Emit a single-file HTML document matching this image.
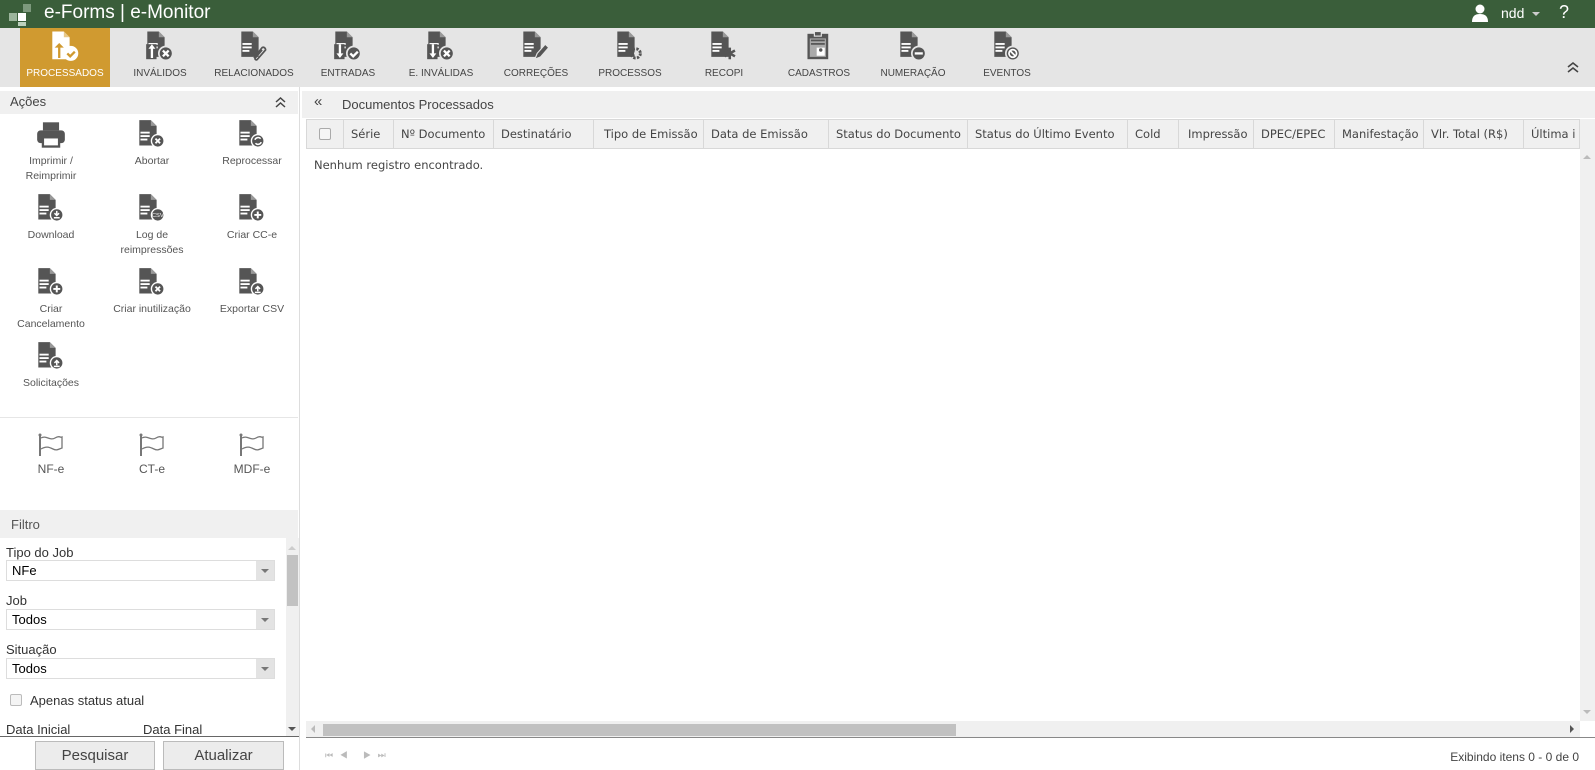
<!DOCTYPE html>
<html><head><meta charset="utf-8"><style>
*{box-sizing:border-box;margin:0;padding:0}
body{width:1595px;height:770px;overflow:hidden;background:#fff;font-family:"Liberation Sans",sans-serif;position:relative;color:#333}
.abs{position:absolute}
#top{left:0;top:0;width:1595px;height:28px;background:#3a5e3a;color:#fff}
#tb{left:0;top:28px;width:1595px;height:59px;background:#e5e5e5}
.tab{position:absolute;top:0;height:59px;width:90px;margin-left:-45px;text-align:center;font-size:10px;color:#444}
.tab svg{position:absolute;left:30px;top:2px}
.tab span{position:absolute;left:-10px;right:-10px;top:40px}
.tab.act{background:#d09a30;color:#fff}
.ic{position:absolute;width:100px;margin-left:-50px;text-align:center;font-size:10.5px;color:#555;line-height:15px}
.ic svg{display:block;margin:0 auto 5px}
.th{position:absolute;top:0;height:29px;line-height:28px;border-right:1px solid #d8d8d8;font-family:"DejaVu Sans",sans-serif;font-size:11.5px;color:#444;padding-left:7px;white-space:nowrap;overflow:hidden}
.lbl{position:absolute;left:6px;font-size:13px;color:#333}
.sel{position:absolute;left:6px;width:269px;height:21px;border:1px solid #ddd;background:#fff;font-size:13px;color:#000;padding:2px 5px}
.sel:after{content:"";position:absolute;right:0;top:0;width:18px;height:19px;background:#e3e3e3}
.sel i{position:absolute;right:5px;top:8px;width:0;height:0;border-left:4px solid transparent;border-right:4px solid transparent;border-top:4px solid #777;z-index:2}
.btn{position:absolute;top:741px;height:29px;border:1px solid #bbb;background:#ececec;font-size:15px;color:#444;text-align:center;line-height:28px}
</style></head><body>
<svg width="0" height="0" style="position:absolute"><defs>
<g id="doc"><path d="M2 1h10l5 5v17H2z" fill="#555"/><path d="M12 1l5 5h-5z" fill="#999"/><rect x="3" y="11" width="8" height="1.6" fill="#fff"/><rect x="3" y="14" width="8" height="1.6" fill="#fff"/><rect x="3" y="17" width="6" height="1.6" fill="#fff"/></g>
</defs></svg>

<div id="top" class="abs">
 <div class="abs" style="left:9px;top:13px;width:8px;height:8px;background:#9cb59c"></div>
 <div class="abs" style="left:18px;top:13px;width:8px;height:8px;background:#fff"></div>
 <div class="abs" style="left:23px;top:4px;width:8px;height:8px;background:#7d997d"></div>
 <div class="abs" style="left:18px;top:22px;width:8px;height:4px;background:#bcd0bc"></div>
 <div class="abs" style="left:44px;top:2px;font-size:19px;color:#fff">e-Forms | e-Monitor</div>
 <svg class="abs" style="left:1472px;top:4px" width="16" height="18"><circle cx="8" cy="5" r="4.5" fill="#fff"/><path d="M0 18c0-6 3-8 8-8s8 2 8 8z" fill="#fff"/></svg>
 <div class="abs" style="left:1501px;top:5px;font-size:14px">ndd</div>
 <div class="abs" style="left:1532px;top:12px;border-left:4px solid transparent;border-right:4px solid transparent;border-top:4px solid #ccc"></div>
 <div class="abs" style="left:1559px;top:2px;font-size:18px">?</div>
</div>

<div id="tb" class="abs">
 <div class="tab act" style="left:65px"><svg width="30" height="33" viewBox="0 0 26 28"><path d="M2 1h10l5 5v19H2z" fill="#fff"/><path d="M12 1l5 5h-5z" fill="#e8c98a"/><path d="M7 24v-9h-3l4-4 4 4h-3v9z" fill="#d09a30"/><circle cx="18" cy="20" r="6.5" fill="#fff"/><path d="M15 20l2.5 2.5 4-4" stroke="#d09a30" stroke-width="2" fill="none"/></svg><span>PROCESSADOS</span></div>
 <div class="tab" style="left:160px"><svg width="30" height="33" viewBox="0 0 26 28"><use href="#doc"/><rect x="1" y="12" width="9" height="13" fill="#555"/><path d="M5 24v-8h-2l3-4 3 4h-2v8z" fill="#fff"/><circle cx="18" cy="20" r="6" fill="#555" stroke="#e5e5e5" stroke-width="1.5"/><path d="M15.5 17.5l5 5m0-5l-5 5" stroke="#fff" stroke-width="2"/></svg><span>INVÁLIDOS</span></div>
 <div class="tab" style="left:254px"><svg width="30" height="33" viewBox="0 0 26 28"><use href="#doc"/><path d="M13 24l7-9a2 2 0 0 1 3 2l-7 8a1 1 0 0 1-2-1l6-7" stroke="#555" stroke-width="1.5" fill="none"/></svg><span>RELACIONADOS</span></div>
 <div class="tab" style="left:348px"><svg width="30" height="33" viewBox="0 0 26 28"><use href="#doc"/><rect x="1" y="12" width="9" height="13" fill="#555"/><path d="M5 12v8h-2l3 4 3-4h-2v-8z" fill="#fff"/><circle cx="18" cy="20" r="6" fill="#555" stroke="#e5e5e5" stroke-width="1.5"/><path d="M15 20l2.5 2.5 4-4" stroke="#fff" stroke-width="2" fill="none"/></svg><span>ENTRADAS</span></div>
 <div class="tab" style="left:441px"><svg width="30" height="33" viewBox="0 0 26 28"><use href="#doc"/><rect x="1" y="12" width="9" height="13" fill="#555"/><path d="M5 12v8h-2l3 4 3-4h-2v-8z" fill="#fff"/><circle cx="18" cy="20" r="6" fill="#555" stroke="#e5e5e5" stroke-width="1.5"/><path d="M15.5 17.5l5 5m0-5l-5 5" stroke="#fff" stroke-width="2"/></svg><span>E. INVÁLIDAS</span></div>
 <div class="tab" style="left:536px"><svg width="30" height="33" viewBox="0 0 26 28"><use href="#doc"/><path d="M12 25l2-5 7-8 3 3-7 8z" fill="#555" stroke="#e5e5e5" stroke-width="1"/></svg><span>CORREÇÕES</span></div>
 <div class="tab" style="left:630px"><svg width="30" height="33" viewBox="0 0 26 28"><use href="#doc"/><circle cx="18" cy="20" r="4" fill="none" stroke="#555" stroke-width="2.5" stroke-dasharray="2 1.2"/><circle cx="18" cy="20" r="1.5" fill="#e5e5e5"/></svg><span>PROCESSOS</span></div>
 <div class="tab" style="left:724px"><svg width="30" height="33" viewBox="0 0 26 28"><use href="#doc"/><path d="M18 15v10m-4.5-7.5l9 5m0-5l-9 5" stroke="#555" stroke-width="2.2"/></svg><span>RECOPI</span></div>
 <div class="tab" style="left:819px"><svg width="30" height="33" viewBox="0 0 26 28"><rect x="3" y="3" width="18" height="22" fill="#555"/><rect x="9" y="1" width="6" height="4" fill="#555" stroke="#e5e5e5"/><rect x="5" y="7" width="14" height="16" fill="#aaa"/><rect x="6" y="8" width="12" height="1.5" fill="#555"/><rect x="6" y="11" width="12" height="1.5" fill="#555"/><rect x="11" y="15" width="7" height="7" fill="#fff"/><circle cx="14.5" cy="17" r="1.5" fill="#555"/></svg><span>CADASTROS</span></div>
 <div class="tab" style="left:913px"><svg width="30" height="33" viewBox="0 0 26 28"><use href="#doc"/><circle cx="18" cy="20" r="6" fill="#555" stroke="#e5e5e5" stroke-width="1.5"/><rect x="14.5" y="19" width="7" height="2" fill="#fff"/></svg><span>NUMERAÇÃO</span></div>
 <div class="tab" style="left:1007px"><svg width="30" height="33" viewBox="0 0 26 28"><use href="#doc"/><circle cx="18" cy="20" r="6" fill="#555" stroke="#e5e5e5" stroke-width="1.5"/><circle cx="18" cy="20" r="3.3" fill="none" stroke="#fff" stroke-width="1.5"/><path d="M15.7 17.7l4.6 4.6" stroke="#fff" stroke-width="1.5"/></svg><span>EVENTOS</span></div>
 <svg class="abs" style="left:1567px;top:33px" width="12" height="12"><path d="M1 6l5-4 5 4M1 11l5-4 5 4" stroke="#444" stroke-width="1.6" fill="none"/></svg>
</div>

<!-- left panel -->
<div class="abs" style="left:0;top:87px;width:300px;height:683px;background:#fff;border-right:1px solid #ddd"></div>
<div class="abs" style="left:0;top:91px;width:298px;height:23px;background:#f0f0f0;font-size:13px;color:#444;padding:3px 10px">Ações<svg style="position:absolute;right:12px;top:5px" width="11" height="12"><path d="M1 6l4.5-4 4.5 4M1 11l4.5-4 4.5 4" stroke="#444" stroke-width="1.5" fill="none"/></svg></div>
<div class="ic" style="left:51px;top:121px"><svg width="30" height="28" viewBox="0 0 26 24"><rect x="6" y="1" width="14" height="7" fill="#555"/><rect x="1" y="8" width="24" height="11" rx="3" fill="#555"/><rect x="6" y="14" width="14" height="8" fill="#fff" stroke="#555" stroke-width="2"/></svg>Imprimir /<br>Reimprimir</div>
<div class="ic" style="left:152px;top:119px"><svg width="30" height="30" viewBox="0 0 26 26"><use href="#doc"/><circle cx="18" cy="19" r="5.5" fill="#555" stroke="#fff" stroke-width="1.2"/><path d="M16 17l4 4m0-4l-4 4" stroke="#fff" stroke-width="1.6"/></svg>Abortar</div>
<div class="ic" style="left:252px;top:119px"><svg width="30" height="30" viewBox="0 0 26 26"><use href="#doc"/><circle cx="18" cy="19" r="5.5" fill="#555" stroke="#fff" stroke-width="1.2"/><path d="M15.5 18a3 3 0 0 1 5-1m.5 3a3 3 0 0 1-5 1" stroke="#fff" stroke-width="1.3" fill="none"/></svg>Reprocessar</div>
<div class="ic" style="left:51px;top:193px"><svg width="30" height="30" viewBox="0 0 26 26"><use href="#doc"/><circle cx="18" cy="19" r="5.5" fill="#555" stroke="#fff" stroke-width="1.2"/><path d="M18 15.5v4m-2-2l2 2 2-2M15.5 21.5h5" stroke="#fff" stroke-width="1.3" fill="none"/></svg>Download</div>
<div class="ic" style="left:152px;top:193px"><svg width="30" height="30" viewBox="0 0 26 26"><use href="#doc"/><circle cx="18" cy="19" r="5.5" fill="#555" stroke="#fff" stroke-width="1.2"/><text x="18" y="21" font-size="5" fill="#fff" text-anchor="middle" font-family="Liberation Sans">CSV</text></svg>Log de<br>reimpressões</div>
<div class="ic" style="left:252px;top:193px"><svg width="30" height="30" viewBox="0 0 26 26"><use href="#doc"/><circle cx="18" cy="19" r="5.5" fill="#555" stroke="#fff" stroke-width="1.2"/><path d="M18 16v6m-3-3h6" stroke="#fff" stroke-width="1.7"/></svg>Criar CC-e</div>
<div class="ic" style="left:51px;top:267px"><svg width="30" height="30" viewBox="0 0 26 26"><use href="#doc"/><circle cx="18" cy="19" r="5.5" fill="#555" stroke="#fff" stroke-width="1.2"/><path d="M18 16v6m-3-3h6" stroke="#fff" stroke-width="1.7"/></svg>Criar<br>Cancelamento</div>
<div class="ic" style="left:152px;top:267px"><svg width="30" height="30" viewBox="0 0 26 26"><use href="#doc"/><circle cx="18" cy="19" r="5.5" fill="#555" stroke="#fff" stroke-width="1.2"/><path d="M16 17l4 4m0-4l-4 4" stroke="#fff" stroke-width="1.6"/></svg>Criar inutilização</div>
<div class="ic" style="left:252px;top:267px"><svg width="30" height="30" viewBox="0 0 26 26"><use href="#doc"/><circle cx="18" cy="19" r="5.5" fill="#555" stroke="#fff" stroke-width="1.2"/><path d="M18 21v-4m-2 2l2-2 2 2M15.5 22h5" stroke="#fff" stroke-width="1.3" fill="none"/></svg>Exportar CSV</div>
<div class="ic" style="left:51px;top:341px"><svg width="30" height="30" viewBox="0 0 26 26"><use href="#doc"/><circle cx="18" cy="19" r="5.5" fill="#555" stroke="#fff" stroke-width="1.2"/><path d="M18 21v-4m-2 2l2-2 2 2M15.5 22h5" stroke="#fff" stroke-width="1.3" fill="none"/></svg>Solicitações</div>
<div class="abs" style="left:0;top:417px;width:298px;height:1px;background:#e6e6e6"></div>
<div class="ic" style="left:51px;top:433px;font-size:12px"><svg width="28" height="24"><path d="M3 2v21" stroke="#777" stroke-width="2"/><circle cx="3" cy="2" r="1.5" fill="#777"/><path d="M4 5c5-3 9 3 14 0s5 0 7-1v11c-3 1-5 3-9 1s-7-3-12 0" fill="none" stroke="#777" stroke-width="1.3"/></svg>NF-e</div>
<div class="ic" style="left:152px;top:433px;font-size:12px"><svg width="28" height="24"><path d="M3 2v21" stroke="#777" stroke-width="2"/><circle cx="3" cy="2" r="1.5" fill="#777"/><path d="M4 5c5-3 9 3 14 0s5 0 7-1v11c-3 1-5 3-9 1s-7-3-12 0" fill="none" stroke="#777" stroke-width="1.3"/></svg>CT-e</div>
<div class="ic" style="left:252px;top:433px;font-size:12px"><svg width="28" height="24"><path d="M3 2v21" stroke="#777" stroke-width="2"/><circle cx="3" cy="2" r="1.5" fill="#777"/><path d="M4 5c5-3 9 3 14 0s5 0 7-1v11c-3 1-5 3-9 1s-7-3-12 0" fill="none" stroke="#777" stroke-width="1.3"/></svg>MDF-e</div>
<div class="abs" style="left:0;top:510px;width:298px;height:28px;background:#f0f0f0;font-size:13px;color:#555;padding:7px 11px 0">Filtro</div>
<div class="lbl" style="top:545px">Tipo do Job</div>
<div class="sel" style="top:560px">NFe<i></i></div>
<div class="lbl" style="top:593px">Job</div>
<div class="sel" style="top:609px">Todos<i></i></div>
<div class="lbl" style="top:642px">Situação</div>
<div class="sel" style="top:658px">Todos<i></i></div>
<div class="abs" style="left:10px;top:694px;width:12px;height:12px;border:1px solid #bbb;border-radius:2px;background:#f4f4f4"></div>
<div class="lbl" style="left:30px;top:693px">Apenas status atual</div>
<div class="lbl" style="top:722px">Data Inicial</div>
<div class="lbl" style="left:143px;top:722px">Data Final</div>
<div class="abs" style="left:286px;top:538px;width:13px;height:198px;background:#f0f0f0"></div>
<div class="abs" style="left:287px;top:555px;width:11px;height:51px;background:#c2c2c2"></div>
<div class="abs" style="left:288px;top:546px;border-left:4px solid transparent;border-right:4px solid transparent;border-bottom:4px solid #ccc"></div>
<div class="abs" style="left:288px;top:727px;border-left:4px solid transparent;border-right:4px solid transparent;border-top:4px solid #555"></div>
<div class="abs" style="left:0;top:736px;width:299px;height:1px;background:#666"></div>
<div class="btn" style="left:35px;width:120px">Pesquisar</div>
<div class="btn" style="left:163px;width:121px">Atualizar</div>

<!-- right panel -->
<div class="abs" style="left:302px;top:91px;width:1293px;height:27px;background:#f0f0f0;font-size:13px;color:#444"><span style="position:absolute;left:12px;top:2px;font-size:15px">«</span><span style="position:absolute;left:40px;top:6px">Documentos Processados</span></div>
<div class="abs" style="left:306px;top:119px;width:1274px;height:30px;background:#f0f0f0;border:1px solid #d8d8d8;overflow:hidden">
 <div class="th" style="left:0;width:37px"><span style="display:inline-block;width:12px;height:12px;border:1px solid #aaa;border-radius:2px;background:#f6f6f6;margin:8px 0 0 5px"></span></div>
 <div class="th" style="left:37px;width:50px">Série</div>
 <div class="th" style="left:87px;width:100px">Nº Documento</div>
 <div class="th" style="left:187px;width:100px">Destinatário</div>
 <div class="th" style="left:287px;width:110px;padding-left:10px">Tipo de Emissão</div>
 <div class="th" style="left:397px;width:125px">Data de Emissão</div>
 <div class="th" style="left:522px;width:139px">Status do Documento</div>
 <div class="th" style="left:661px;width:160px">Status do Último Evento</div>
 <div class="th" style="left:821px;width:51px">Cold</div>
 <div class="th" style="left:872px;width:75px;padding-left:9px">Impressão</div>
 <div class="th" style="left:947px;width:81px">DPEC/EPEC</div>
 <div class="th" style="left:1028px;width:89px">Manifestação</div>
 <div class="th" style="left:1117px;width:100px">Vlr. Total (R$)</div>
 <div class="th" style="left:1217px;width:80px;border:none">Última i</div>
</div>
<div class="abs" style="left:1580px;top:119px;width:15px;height:602px;background:#f0f0f0"></div>
<div class="abs" style="left:1583px;top:155px;border-left:4px solid transparent;border-right:4px solid transparent;border-bottom:4px solid #bbb"></div>
<div class="abs" style="left:1583px;top:710px;border-left:4px solid transparent;border-right:4px solid transparent;border-top:4px solid #bbb"></div>
<div class="abs" style="left:314px;top:158px;font-family:'DejaVu Sans',sans-serif;font-size:11.5px;color:#444">Nenhum registro encontrado.</div>
<div class="abs" style="left:306px;top:721px;width:1274px;height:16px;background:#f0f0f0"></div>
<div class="abs" style="left:323px;top:724px;width:633px;height:12px;background:#c1c1c1"></div>
<div class="abs" style="left:311px;top:725px;border-top:4px solid transparent;border-bottom:4px solid transparent;border-right:4px solid #bbb"></div>
<div class="abs" style="left:1570px;top:725px;border-top:4px solid transparent;border-bottom:4px solid transparent;border-left:4px solid #555"></div>
<div class="abs" style="left:306px;top:737px;width:1289px;height:1px;background:#888"></div>
<div class="abs" style="left:325px;top:750px;font-size:9px;color:#bbb;letter-spacing:2px">⏮ ◀ &nbsp; ▶ ⏭</div>
<div class="abs" style="left:1430px;top:750px;width:149px;text-align:right;font-size:12px;color:#444">Exibindo itens 0 - 0 de 0</div>
</body></html>
